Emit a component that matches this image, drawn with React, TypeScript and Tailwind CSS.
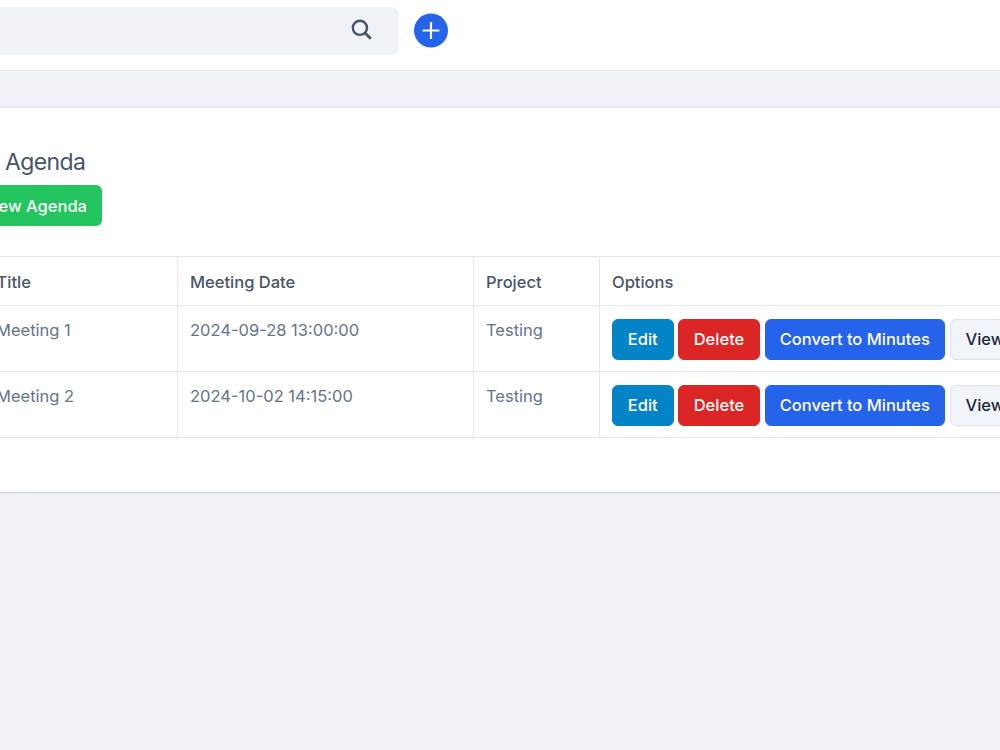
import React from 'react';

interface Agenda {
  id: number;
  title: string;
  meetingDate: string;
  project: string;
}

const agendas: Agenda[] = [
  { id: 1, title: 'Meeting 1', meetingDate: '2024-09-28 13:00:00', project: 'Testing' },
  { id: 2, title: 'Meeting 2', meetingDate: '2024-10-02 14:15:00', project: 'Testing' },
];

const actions = [
  { label: 'Edit', width: 'w-[61.5px]', style: 'bg-[#0284c7] border-[#0284c7] text-white' },
  { label: 'Delete', width: 'w-[82px]', style: 'bg-[#dc2626] border-[#dc2626] text-white' },
  { label: 'Convert to Minutes', width: 'w-[180.5px]', style: 'bg-[#2563eb] border-[#2563eb] text-white' },
  { label: 'View', width: 'w-[71px]', style: 'bg-[#f1f5f9] border-[#dbe3ed] text-[#1e293b]' },
];

const columns = 'grid grid-cols-[190px_296px_126px_1fr]';

const Header: React.FC = () => (
  <header className="flex h-[71px] items-start border-b border-[#e2e8f0] bg-white">
    <div className="mt-[7px] flex h-12 w-[399px] items-center justify-end rounded-r-lg bg-[#eff3f8] pr-[26px]">
      <svg width="23" height="23" viewBox="0 0 23 23" fill="none" stroke="#475569" strokeWidth="2.4" className="-mt-1">
        <circle cx="9.9" cy="9.8" r="7.1" />
        <path d="M14.8 14.8L20.8 20.8" strokeWidth="2.8" />
      </svg>
    </div>
    <button className="mt-[13px] ml-[15px] flex h-[34px] w-[34px] translate-y-[0.5px] items-center justify-center rounded-full bg-[#2563eb]">
      <svg width="18" height="18" viewBox="0 0 18 18" fill="none" stroke="white" strokeWidth="2.2">
        <path d="M9 0.6V17.4M0.6 9H17.4" />
      </svg>
    </button>
  </header>
);

const App: React.FC = () => {
  return (
    <div className="h-[750px] w-[1000px] overflow-hidden bg-[#f0f4f9] font-['Inter',sans-serif] text-[16.5px] leading-6 text-[#64748b]">
      <Header />

      <section className="mt-9 h-[385px] border-t border-[#e2e8f0] bg-white shadow-[0_1px_2px_rgba(100,116,139,0.3)]">
        <h1 className="pt-[40px] pl-[5px] text-[23px] leading-7 tracking-[-0.6px] text-[#475569]">Agenda</h1>
        <button className="mt-[9px] -ml-[30px] flex h-[41px] w-[132px] items-center justify-end rounded-md bg-[#22c55e] pr-[15px] font-medium whitespace-nowrap text-white">
          New Agenda
        </button>

        <div className="mt-[30px] -ml-[13px] w-[1120px] border-t border-[#e2e8f0]">
          <div className={`${columns} h-[49px] border-b border-[#e2e8f0] font-medium text-[#475569]`}>
            {['Title', 'Meeting Date', 'Project', 'Options'].map((name) => (
              <div key={name} className="border-l border-[#e2e8f0] px-3 pt-[13px] first:pl-[8.5px]">
                {name}
              </div>
            ))}
          </div>
          {agendas.map((agenda) => (
            <div key={agenda.id} className={`${columns} h-[66px] border-b border-[#e2e8f0]`}>
              <div className="border-l border-[#e2e8f0] pt-3 pl-2">{agenda.title}</div>
              <div className="border-l border-[#e2e8f0] px-3 pt-3">{agenda.meetingDate}</div>
              <div className="border-l border-[#e2e8f0] px-3 pt-3">{agenda.project}</div>
              <div className="flex gap-[4.5px] border-l border-[#e2e8f0] px-3 pt-[13px]">
                {actions.map((action) => (
                  <button
                    key={action.label}
                    className={`h-[40.5px] shrink-0 rounded-md border font-medium whitespace-nowrap ${action.width} ${action.style}`}
                  >
                    {action.label}
                  </button>
                ))}
              </div>
            </div>
          ))}
        </div>
      </section>
    </div>
  );
};

export default App;
